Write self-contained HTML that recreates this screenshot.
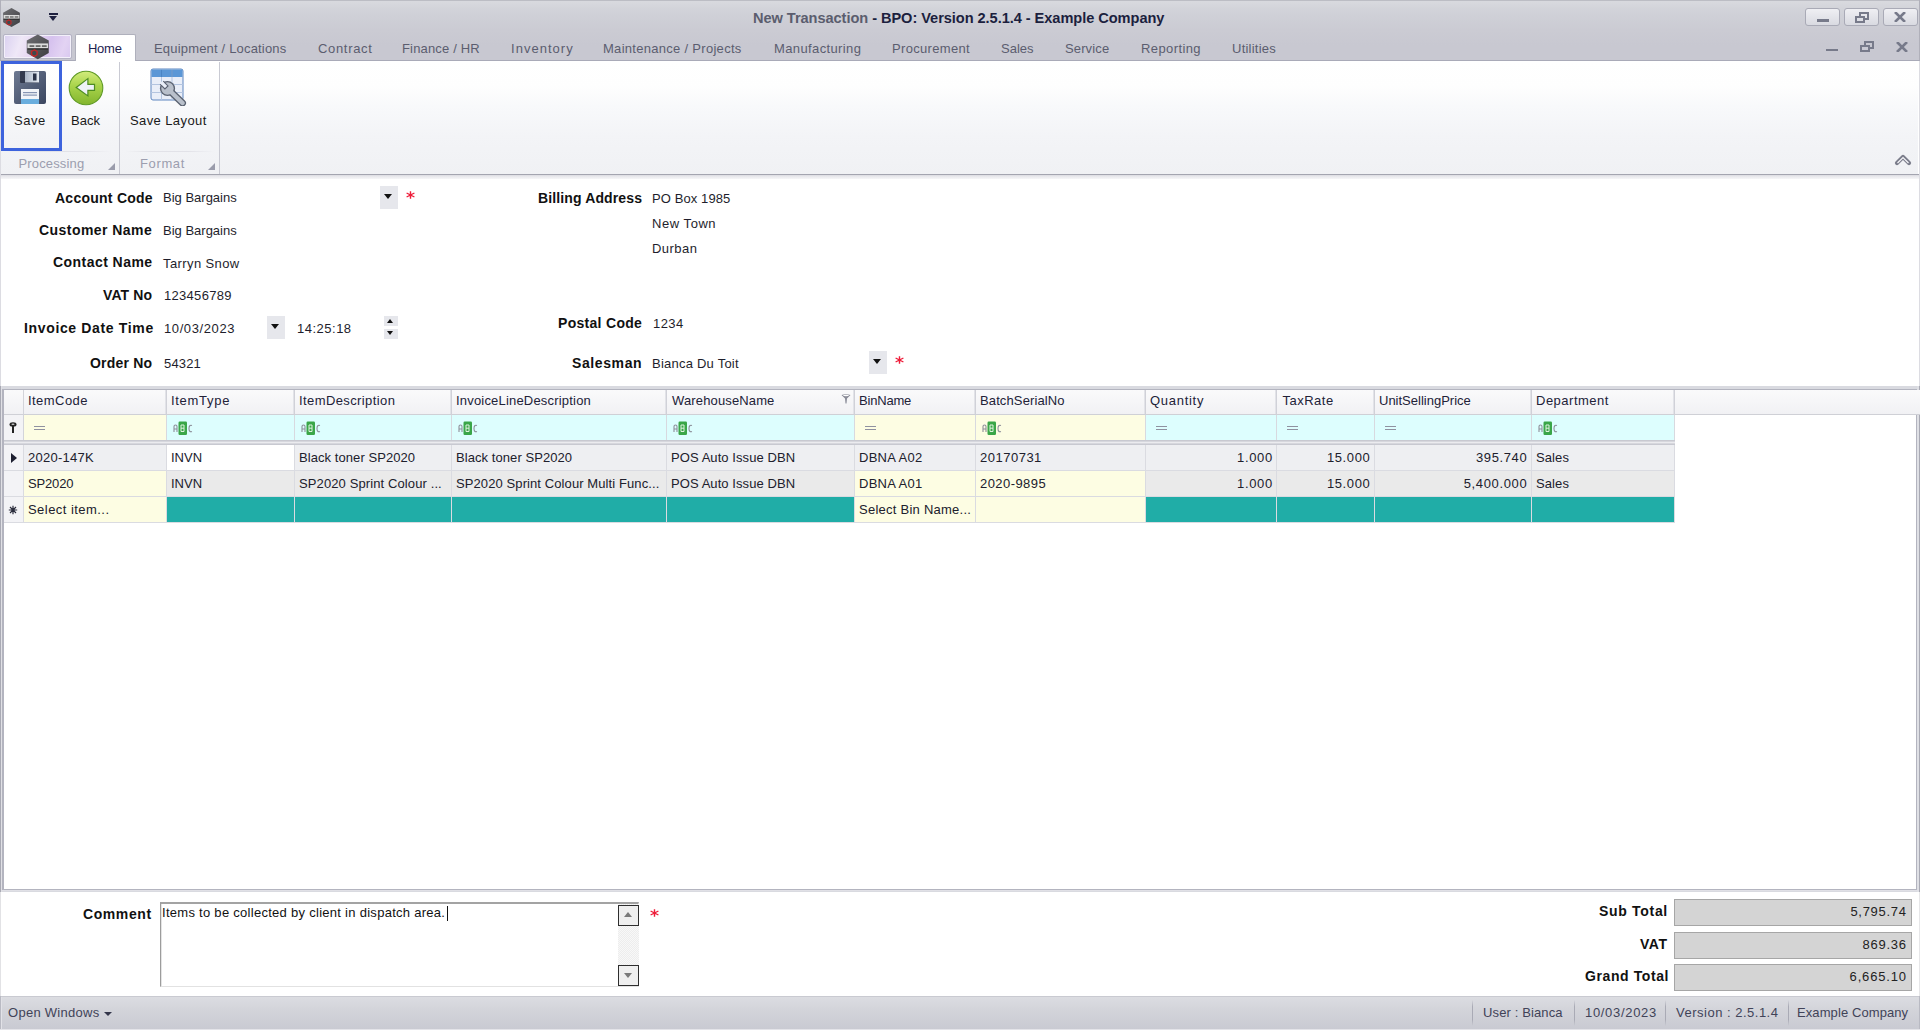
<!DOCTYPE html><html><head><meta charset="utf-8"><style>
*{box-sizing:border-box;margin:0;padding:0}
html,body{width:1920px;height:1030px;overflow:hidden;background:#fff;font-family:"Liberation Sans",sans-serif;font-size:13px;color:#1a1a1a}
div,span{position:absolute;white-space:nowrap}
.t{line-height:16px}
.tab{top:41px;font-size:13px;color:#5b5d6f;line-height:16px}
.wbtn{top:8px;width:35px;height:18px;border:1px solid #a9aab6;border-radius:3px;background:linear-gradient(#efeff3,#d9dae1)}
.lbl{font-weight:bold;font-size:14px;color:#111;line-height:16px;text-align:right}
.val{font-size:13px;color:#1e1e2c;line-height:16px}
.dd{width:18px;height:23px;background:#e6e7ec}
.dd i{position:absolute;left:4px;top:8px;width:0;height:0;border-left:4.7px solid transparent;border-right:4.7px solid transparent;border-top:5.5px solid #111}
.req{color:#e8202c;font-size:17px;font-weight:bold;line-height:16px}
.cell{height:26px;line-height:26px;padding-left:5px;font-size:13px;color:#20202c;overflow:hidden;border-right:1px solid #dadbe1;border-bottom:1px solid #dadbe1}
.hc{height:25px;line-height:22px;padding-left:5px;font-size:13px;color:#222238;background:linear-gradient(#fafafb,#f1f1f4);border-right:2px solid #dadbe0;border-bottom:1px solid #cfd0d6}
.fc{height:25px;border-right:1px solid #d8d9df}
.r{text-align:right;padding-left:0;padding-right:4px}
.abc{top:8px;left:5px;width:20px;height:14px}
.eq{top:11px;left:10px;width:11px;height:4px;border-top:1px solid #8f91a0;border-bottom:1px solid #8f91a0}
.tot{width:238px;height:27px;background:#d4d4d4;border:1px solid #a6a6a6;text-align:right;padding-right:5px;line-height:25px;font-size:13px;color:#222}
.sb{top:1005px;font-size:13px;color:#414358;line-height:16px}
.sep{top:1000px;width:1px;height:26px;background:linear-gradient(rgba(170,171,182,0),#a9aab5 25%,#a9aab5 75%,rgba(170,171,182,0))}
</style></head><body>
<div style="left:0;top:0;width:1920px;height:61px;background:linear-gradient(#d9dadf 0px,#d8d9de 2px,#d3d4da 8px,#cfd0d7 16px,#cbcbd3 30px,#c8c8d1 45px,#c8c8d1 61px)"></div>
<div style="left:0;top:0;width:1920px;height:1px;background:#bcbdc4"></div>
<div style="left:0;top:0;width:1px;height:61px;background:#b0b0ba"></div>
<div style="left:1919px;top:0;width:1px;height:61px;background:#b0b0ba"></div>
<div style="left:0;top:60px;width:1920px;height:1px;background:#a9aab8"></div>
<svg style="position:absolute;left:1px;top:7px" width="21" height="21" viewBox="0 0 20 20"><defs><linearGradient id="lg" x1="0" y1="0" x2="1" y2="1"><stop offset="0" stop-color="#707074"/><stop offset="1" stop-color="#3c3c40"/></linearGradient></defs><polygon points="10,1 18,5.5 18,14.5 10,19 2,14.5 2,5.5" fill="url(#lg)"/><rect x="2.5" y="7.6" width="15" height="3.6" fill="#dcdcdc"/><rect x="4" y="9" width="3.5" height="1" fill="#444"/><rect x="8.5" y="9" width="3.5" height="1" fill="#444"/><rect x="13" y="9" width="3.5" height="1" fill="#444"/><rect x="2.5" y="11.2" width="15" height="0.8" fill="#222"/><polygon points="7.5,12.3 9.5,13.4 9.5,15.8 7.5,17 5.5,15.8 5.5,13.4" fill="#3e4a4e" stroke="#c42626" stroke-width="1"/></svg>
<div style="left:49px;top:13px;width:9px;height:2px;background:#1f2140"></div>
<div style="left:49px;top:16px;width:0;height:0;border-left:4.5px solid transparent;border-right:4.5px solid transparent;border-top:5px solid #1f2140"></div>
<div class="t" style="left:753px;top:10px;font-weight:bold;font-size:14.6px;color:#1c1f3e;letter-spacing:-0.055px"><span style="position:static;color:#5b5d6e">New Transaction</span> - BPO: Version 2.5.1.4 - Example Company</div>
<div class="wbtn" style="left:1805px"></div>
<div class="wbtn" style="left:1844px"></div>
<div class="wbtn" style="left:1883px"></div>
<div style="left:1817px;top:19px;width:12px;height:3px;background:#777a8a"></div>
<div style="left:1859px;top:12px;width:10px;height:8px;border:2px solid #777a8a;border-top-width:2px"></div>
<div style="left:1855px;top:16px;width:10px;height:7px;border:2px solid #777a8a;background:#dedfe5"></div>
<svg style="position:absolute;left:1894px;top:12px" width="12" height="10" viewBox="0 0 12 10"><path d="M1,0 L11,10 M11,0 L1,10" stroke="#777a8a" stroke-width="2.6"/></svg>
<div style="left:1826px;top:49px;width:12px;height:2px;background:#777a8a"></div>
<div style="left:1864px;top:41px;width:10px;height:8px;border:2px solid #777a8a"></div>
<div style="left:1860px;top:45px;width:10px;height:7px;border:2px solid #777a8a;background:#c9c9d3"></div>
<svg style="position:absolute;left:1896px;top:42px" width="12" height="10" viewBox="0 0 12 10"><path d="M1,0 L11,10 M11,0 L1,10" stroke="#777a8a" stroke-width="2.6"/></svg>
<div style="left:3px;top:34px;width:69px;height:25px;border:1px solid #b5b4c4;box-shadow:inset 0 0 0 1px #f3f0fa;border-radius:2px;background:linear-gradient(110deg,#d9d0f0 0%,#efe8f7 25%,#e6d6f2 45%,#d6c2ee 65%,#e3d3f3 85%,#d8c8ef 100%)"></div>
<svg style="position:absolute;left:23.5px;top:33px" width="27.5" height="27.5" viewBox="0 0 20 20"><defs><linearGradient id="lg" x1="0" y1="0" x2="1" y2="1"><stop offset="0" stop-color="#707074"/><stop offset="1" stop-color="#3c3c40"/></linearGradient></defs><polygon points="10,1 18,5.5 18,14.5 10,19 2,14.5 2,5.5" fill="url(#lg)"/><rect x="2.5" y="7.6" width="15" height="3.6" fill="#dcdcdc"/><rect x="4" y="9" width="3.5" height="1" fill="#444"/><rect x="8.5" y="9" width="3.5" height="1" fill="#444"/><rect x="13" y="9" width="3.5" height="1" fill="#444"/><rect x="2.5" y="11.2" width="15" height="0.8" fill="#222"/><polygon points="7.5,12.3 9.5,13.4 9.5,15.8 7.5,17 5.5,15.8 5.5,13.4" fill="#3e4a4e" stroke="#c42626" stroke-width="1"/></svg>
<div style="left:75px;top:34px;width:61px;height:27px;background:#fff;border:1px solid #afb0bc;border-bottom:none;border-radius:2px 2px 0 0"></div>
<div class="tab" style="left:88px;letter-spacing:-0.27px;color:#1d2250">Home</div>
<div class="tab" style="left:154px;letter-spacing:0.18px">Equipment / Locations</div>
<div class="tab" style="left:318px;letter-spacing:0.67px">Contract</div>
<div class="tab" style="left:402px;letter-spacing:0.16px">Finance / HR</div>
<div class="tab" style="left:511px;letter-spacing:1.03px">Inventory</div>
<div class="tab" style="left:603px;letter-spacing:0.29px">Maintenance / Projects</div>
<div class="tab" style="left:774px;letter-spacing:0.38px">Manufacturing</div>
<div class="tab" style="left:892px;letter-spacing:0.33px">Procurement</div>
<div class="tab" style="left:1001px;letter-spacing:0px">Sales</div>
<div class="tab" style="left:1065px;letter-spacing:0.13px">Service</div>
<div class="tab" style="left:1141px;letter-spacing:0.4px">Reporting</div>
<div class="tab" style="left:1232px;letter-spacing:0.24px">Utilities</div>
<div style="left:1px;top:61px;width:1917px;height:113px;background:linear-gradient(#ffffff 0px,#fefefe 25px,#f8f9fb 45px,#f3f4f7 75px,#f0f1f4 113px)"></div>
<div style="left:0;top:174px;width:1920px;height:1px;background:#a4a5b0"></div>
<div style="left:0;top:175px;width:1920px;height:4px;background:linear-gradient(#dcdce1,#e8e8ec 35%,#f6f6f8 100%)"></div>
<div style="left:119px;top:62px;width:1px;height:112px;background:#c9cad3"></div>
<div style="left:219px;top:62px;width:1px;height:112px;background:#c9cad3"></div>
<div style="left:4px;top:151px;width:108px;height:1px;background:linear-gradient(90deg,rgba(220,220,228,0),#e2e2e8 30%,#e2e2e8 70%,rgba(220,220,228,0))"></div>
<div style="left:125px;top:151px;width:90px;height:1px;background:linear-gradient(90deg,rgba(220,220,228,0),#e2e2e8 30%,#e2e2e8 70%,rgba(220,220,228,0))"></div>
<div class="t" style="left:18.5px;top:156px;color:#9c9eaf;letter-spacing:0.15px">Processing</div>
<div class="t" style="left:140px;top:156px;color:#9c9eaf;letter-spacing:0.63px">Format</div>
<svg style="position:absolute;left:108px;top:163px" width="7" height="7"><path d="M7,0 L7,7 L0,7 Z" fill="#9a9cab"/></svg>
<svg style="position:absolute;left:208px;top:163px" width="7" height="7"><path d="M7,0 L7,7 L0,7 Z" fill="#9a9cab"/></svg>
<div style="left:1px;top:61px;width:61px;height:90px;border:3px solid #3d63dd"></div>
<svg style="position:absolute;left:14px;top:71px" width="32" height="33" viewBox="0 0 32 33">
<defs><linearGradient id="fl" x1="0" y1="0" x2="1" y2="1"><stop offset="0" stop-color="#6e7a92"/><stop offset="1" stop-color="#3b4660"/></linearGradient></defs>
<rect x="0" y="0" width="32" height="33" rx="2" fill="url(#fl)"/>
<rect x="6" y="0" width="19" height="12" rx="1" fill="#333a4e"/>
<defs><linearGradient id="sh" x1="0" y1="0" x2="1" y2="0"><stop offset="0" stop-color="#aab5c6"/><stop offset="1" stop-color="#e6ebf2"/></linearGradient></defs>
<rect x="11" y="0.5" width="14" height="11" fill="url(#sh)"/>
<rect x="19" y="2.5" width="3.5" height="7" fill="#2b3347"/>
<rect x="7" y="18" width="18" height="15" fill="#f2f4f8"/>
<rect x="9" y="21" width="14" height="1.2" fill="#8795b4"/><rect x="9" y="23.5" width="14" height="1.2" fill="#8795b4"/>
<rect x="7" y="28" width="18" height="5" fill="#6aaede"/>
</svg>
<div class="t" style="left:14px;top:113px;letter-spacing:0.5px">Save</div>
<svg style="position:absolute;left:68px;top:70px" width="36" height="36" viewBox="0 0 36 36">
<defs><linearGradient id="bk" x1="0" y1="0" x2="0" y2="1"><stop offset="0" stop-color="#d2ec7c"/><stop offset="0.45" stop-color="#a8d34a"/><stop offset="1" stop-color="#82b52e"/></linearGradient></defs>
<circle cx="18" cy="18" r="16.8" fill="url(#bk)" stroke="#5f9a26" stroke-width="1.1"/>
<path d="M8.2,17.4 L19.9,8.6 L19.9,14.4 L26.5,14.4 L26.5,20.4 L19.9,20.4 L19.9,25.9 Z" fill="#eef2f6" stroke="#4d8c22" stroke-width="1.2" stroke-linejoin="miter"/>
</svg>
<div class="t" style="left:71px;top:113px">Back</div>
<svg style="position:absolute;left:150px;top:68px" width="38" height="38" viewBox="0 0 38 38">
<rect x="1" y="1" width="32" height="31" rx="2" fill="#e9eef8" stroke="#5f86c0" stroke-width="1"/>
<rect x="1.5" y="1.5" width="31" height="7.5" fill="#5b97d6"/>
<path d="M11.5,1 V32 M22,1 V32 M1,16.5 H33 M1,24.5 H33" stroke="#b3c4df" stroke-width="1"/>
<path d="M11.5,1.5 V9 M22,1.5 V9" stroke="#4a84c4" stroke-width="1"/>
<path d="M19,22 L32.5,35" stroke="#596170" stroke-width="7" stroke-linecap="round"/>
<circle cx="17.5" cy="20.5" r="7.6" fill="#596170"/>
<path d="M19,22 L32.5,35" stroke="#b9c0cb" stroke-width="4.4" stroke-linecap="round"/>
<circle cx="17.5" cy="20.5" r="6.2" fill="#b9c0cb"/>
<path d="M15.3,12.2 V19 H19.7 V12.2" fill="#e9eef8" stroke="#596170" stroke-width="1.1" transform="rotate(-45 17.5 20.5)"/>
<rect x="15.85" y="11.5" width="3.3" height="2" fill="#e9eef8" transform="rotate(-45 17.5 20.5)"/>
</svg>
<div class="t" style="left:130px;top:113px;letter-spacing:0.4px">Save Layout</div>
<svg style="position:absolute;left:1894px;top:153px" width="18" height="14" viewBox="0 0 18 14"><path d="M3,10 L9,4 L15,10" fill="none" stroke="#7a7c8a" stroke-width="4.2" stroke-linejoin="round" stroke-linecap="round"/><path d="M3.5,10 L9,4.6 L14.5,10" fill="none" stroke="#f4f4f7" stroke-width="1.3" stroke-linejoin="miter"/></svg>
<div class="lbl" style="left:55px;top:190px;letter-spacing:0.25px;font-size:14px">Account Code</div>
<div class="lbl" style="left:39px;top:222px;letter-spacing:0.45px;font-size:14px">Customer Name</div>
<div class="lbl" style="left:53px;top:254px;letter-spacing:0.45px;font-size:14px">Contact Name</div>
<div class="lbl" style="left:103px;top:287px;letter-spacing:0.1px;font-size:14px">VAT No</div>
<div class="lbl" style="left:24px;top:320px;letter-spacing:0.65px;font-size:14px">Invoice Date Time</div>
<div class="lbl" style="left:90px;top:355px;letter-spacing:0.2px;font-size:14px">Order No</div>
<div class="lbl" style="left:538px;top:190px;letter-spacing:0.13px;font-size:14px">Billing Address</div>
<div class="lbl" style="left:558px;top:315px;letter-spacing:0.3px;font-size:14px">Postal Code</div>
<div class="lbl" style="left:572px;top:355px;letter-spacing:0.6px;font-size:14px">Salesman</div>
<div class="val" style="left:163px;top:190px;letter-spacing:0px">Big Bargains</div>
<div class="val" style="left:163px;top:223px;letter-spacing:0px">Big Bargains</div>
<div class="val" style="left:163px;top:256px;letter-spacing:0.4px">Tarryn Snow</div>
<div class="val" style="left:164px;top:288px;letter-spacing:0.3px">123456789</div>
<div class="val" style="left:164px;top:321px;letter-spacing:0.6px">10/03/2023</div>
<div class="val" style="left:164px;top:356px;letter-spacing:0.15px">54321</div>
<div class="val" style="left:297px;top:321px;letter-spacing:0.5px">14:25:18</div>
<div class="val" style="left:652px;top:191px;letter-spacing:0.1px">PO Box 1985</div>
<div class="val" style="left:652px;top:216px;letter-spacing:0.55px">New Town</div>
<div class="val" style="left:652px;top:241px;letter-spacing:0.45px">Durban</div>
<div class="val" style="left:653px;top:316px;letter-spacing:0.4px">1234</div>
<div class="val" style="left:652px;top:356px;letter-spacing:0.23px">Bianca Du Toit</div>
<div class="dd" style="left:380px;top:186px"><i></i></div>
<svg style="position:absolute;left:406px;top:191px" width="9" height="8" viewBox="0 0 9 8"><path d="M4.5,0.3 V7.7 M0.6,2 L8.4,6 M0.6,6 L8.4,2" stroke="#ee1d3a" stroke-width="1.4"/></svg>
<div class="dd" style="left:267px;top:316px"><i></i></div>
<div style="left:384px;top:316px;width:14px;height:10px;background:#e6e7ec"></div>
<div style="left:384px;top:329px;width:14px;height:10px;background:#e6e7ec"></div>
<div style="left:387px;top:319px;width:0;height:0;border-left:3.7px solid transparent;border-right:3.7px solid transparent;border-bottom:4.5px solid #111"></div>
<div style="left:387px;top:331px;width:0;height:0;border-left:3.7px solid transparent;border-right:3.7px solid transparent;border-top:4.5px solid #111"></div>
<div class="dd" style="left:869px;top:351px"><i></i></div>
<svg style="position:absolute;left:895px;top:356px" width="9" height="8" viewBox="0 0 9 8"><path d="M4.5,0.3 V7.7 M0.6,2 L8.4,6 M0.6,6 L8.4,2" stroke="#ee1d3a" stroke-width="1.4"/></svg>
<div style="left:0;top:61px;width:1px;height:325px;background:#dcdce2"></div>
<div style="left:1919px;top:61px;width:1px;height:325px;background:#dcdce2"></div>
<div style="left:0;top:892px;width:1px;height:104px;background:#e2e2e5"></div>
<div style="left:1919px;top:892px;width:1px;height:104px;background:#e6e6e8"></div>
<div style="left:0;top:386px;width:1920px;height:506px;background:#a9aab4"></div>
<div style="left:1px;top:386px;width:1918px;height:506px;background:#d9dae0"></div>
<div style="left:1px;top:386px;width:1px;height:506px;background:#e0e0e5"></div>
<div style="left:1917px;top:386px;width:2px;height:506px;background:#dfe0e5"></div>
<div style="left:1px;top:890px;width:1918px;height:1px;background:#e0e0e6"></div>
<div style="left:2px;top:389px;width:1915px;height:501px;background:#b3b4bf"></div>
<div style="left:4px;top:390px;width:1912px;height:499px;background:#fff"></div>
<div class="hc" style="left:4px;top:390px;width:20px;border-right:1px solid #d3d4da"></div>
<div class="hc" style="left:24px;top:390px;width:143px;padding-left:4px;letter-spacing:0.45px;border-right:1px solid #d0d1d8;box-shadow:inset -1px 0 0 #e2e3e8">ItemCode</div>
<div class="hc" style="left:167px;top:390px;width:128px;padding-left:4px;letter-spacing:0.7px;border-right:1px solid #d0d1d8;box-shadow:inset -1px 0 0 #e2e3e8">ItemType</div>
<div class="hc" style="left:295px;top:390px;width:157px;padding-left:4px;letter-spacing:0.4px;border-right:1px solid #d0d1d8;box-shadow:inset -1px 0 0 #e2e3e8">ItemDescription</div>
<div class="hc" style="left:452px;top:390px;width:215px;padding-left:4px;letter-spacing:0.19px;border-right:1px solid #d0d1d8;box-shadow:inset -1px 0 0 #e2e3e8">InvoiceLineDescription</div>
<div class="hc" style="left:667px;top:390px;width:188px;padding-left:5px;letter-spacing:0.14px;border-right:1px solid #d0d1d8;box-shadow:inset -1px 0 0 #e2e3e8">WarehouseName</div>
<div class="hc" style="left:855px;top:390px;width:121px;padding-left:4px;letter-spacing:-0.2px;border-right:1px solid #d0d1d8;box-shadow:inset -1px 0 0 #e2e3e8">BinName</div>
<div class="hc" style="left:976px;top:390px;width:170px;padding-left:4px;letter-spacing:0.12px;border-right:1px solid #d0d1d8;box-shadow:inset -1px 0 0 #e2e3e8">BatchSerialNo</div>
<div class="hc" style="left:1146px;top:390px;width:131px;padding-left:4px;letter-spacing:0.72px;border-right:1px solid #d0d1d8;box-shadow:inset -1px 0 0 #e2e3e8">Quantity</div>
<div class="hc" style="left:1277px;top:390px;width:98px;padding-left:5.5px;letter-spacing:0.5px;border-right:1px solid #d0d1d8;box-shadow:inset -1px 0 0 #e2e3e8">TaxRate</div>
<div class="hc" style="left:1375px;top:390px;width:157px;padding-left:4px;letter-spacing:0px;border-right:1px solid #d0d1d8;box-shadow:inset -1px 0 0 #e2e3e8">UnitSellingPrice</div>
<div class="hc" style="left:1532px;top:390px;width:143px;padding-left:4px;letter-spacing:0.5px;border-right:1px solid #d0d1d8;box-shadow:inset -1px 0 0 #e2e3e8">Department</div>
<div class="hc" style="left:1675px;top:390px;width:1241px;border-right:none"></div>
<svg style="position:absolute;left:841px;top:394px" width="10" height="10" viewBox="0 0 10 10"><path d="M0.5,1 Q5,-0.5 9.5,1 L6,4.5 L5.5,9.5 L4.5,9.5 L4,4.5 Z" fill="#8a8c98"/><ellipse cx="5" cy="1.5" rx="3" ry="0.8" fill="#fff"/></svg>
<div class="fc" style="left:4px;top:415px;width:20px;background:#f3f3f6;border-right:1px solid #d3d4da"></div>
<svg style="position:absolute;left:9px;top:422px" width="8" height="11" viewBox="0 0 8 11"><ellipse cx="4" cy="2.5" rx="3.5" ry="2.2" fill="#222"/><rect x="3" y="3" width="2" height="8" fill="#222"/><ellipse cx="4" cy="2.3" rx="1.6" ry="0.8" fill="#ccc"/></svg>
<div class="fc" style="left:24px;top:415px;width:143px;background:#fdfde3"><div class="eq"></div></div>
<div class="fc" style="left:167px;top:415px;width:128px;background:#ddfefe"><svg style="position:absolute;left:6px;top:6px" width="22" height="15" viewBox="0 0 22 15"><path d="M1,11 L1,5.5 Q1,4 2.5,4 Q4,4 4,5.5 L4,11 M1,8 L4,8" fill="none" stroke="#8d8e99" stroke-width="1.1"/><rect x="5.5" y="0.5" width="8.5" height="13.5" rx="1.2" fill="#3aa648"/><path d="M8,4 L11,4 L11,10.5 L8,10.5 Z M8,7.2 L11,7.2" fill="none" stroke="#dff2df" stroke-width="1"/><path d="M19,4.5 Q16,3.5 16,7.5 Q16,11.5 19,10.5" fill="none" stroke="#8d8e99" stroke-width="1.1"/></svg></div>
<div class="fc" style="left:295px;top:415px;width:157px;background:#ddfefe"><svg style="position:absolute;left:6px;top:6px" width="22" height="15" viewBox="0 0 22 15"><path d="M1,11 L1,5.5 Q1,4 2.5,4 Q4,4 4,5.5 L4,11 M1,8 L4,8" fill="none" stroke="#8d8e99" stroke-width="1.1"/><rect x="5.5" y="0.5" width="8.5" height="13.5" rx="1.2" fill="#3aa648"/><path d="M8,4 L11,4 L11,10.5 L8,10.5 Z M8,7.2 L11,7.2" fill="none" stroke="#dff2df" stroke-width="1"/><path d="M19,4.5 Q16,3.5 16,7.5 Q16,11.5 19,10.5" fill="none" stroke="#8d8e99" stroke-width="1.1"/></svg></div>
<div class="fc" style="left:452px;top:415px;width:215px;background:#ddfefe"><svg style="position:absolute;left:6px;top:6px" width="22" height="15" viewBox="0 0 22 15"><path d="M1,11 L1,5.5 Q1,4 2.5,4 Q4,4 4,5.5 L4,11 M1,8 L4,8" fill="none" stroke="#8d8e99" stroke-width="1.1"/><rect x="5.5" y="0.5" width="8.5" height="13.5" rx="1.2" fill="#3aa648"/><path d="M8,4 L11,4 L11,10.5 L8,10.5 Z M8,7.2 L11,7.2" fill="none" stroke="#dff2df" stroke-width="1"/><path d="M19,4.5 Q16,3.5 16,7.5 Q16,11.5 19,10.5" fill="none" stroke="#8d8e99" stroke-width="1.1"/></svg></div>
<div class="fc" style="left:667px;top:415px;width:188px;background:#ddfefe"><svg style="position:absolute;left:6px;top:6px" width="22" height="15" viewBox="0 0 22 15"><path d="M1,11 L1,5.5 Q1,4 2.5,4 Q4,4 4,5.5 L4,11 M1,8 L4,8" fill="none" stroke="#8d8e99" stroke-width="1.1"/><rect x="5.5" y="0.5" width="8.5" height="13.5" rx="1.2" fill="#3aa648"/><path d="M8,4 L11,4 L11,10.5 L8,10.5 Z M8,7.2 L11,7.2" fill="none" stroke="#dff2df" stroke-width="1"/><path d="M19,4.5 Q16,3.5 16,7.5 Q16,11.5 19,10.5" fill="none" stroke="#8d8e99" stroke-width="1.1"/></svg></div>
<div class="fc" style="left:855px;top:415px;width:121px;background:#fdfde3"><div class="eq"></div></div>
<div class="fc" style="left:976px;top:415px;width:170px;background:#fdfde3"><svg style="position:absolute;left:6px;top:6px" width="22" height="15" viewBox="0 0 22 15"><path d="M1,11 L1,5.5 Q1,4 2.5,4 Q4,4 4,5.5 L4,11 M1,8 L4,8" fill="none" stroke="#8d8e99" stroke-width="1.1"/><rect x="5.5" y="0.5" width="8.5" height="13.5" rx="1.2" fill="#3aa648"/><path d="M8,4 L11,4 L11,10.5 L8,10.5 Z M8,7.2 L11,7.2" fill="none" stroke="#dff2df" stroke-width="1"/><path d="M19,4.5 Q16,3.5 16,7.5 Q16,11.5 19,10.5" fill="none" stroke="#8d8e99" stroke-width="1.1"/></svg></div>
<div class="fc" style="left:1146px;top:415px;width:131px;background:#ddfefe"><div class="eq"></div></div>
<div class="fc" style="left:1277px;top:415px;width:98px;background:#ddfefe"><div class="eq"></div></div>
<div class="fc" style="left:1375px;top:415px;width:157px;background:#ddfefe"><div class="eq"></div></div>
<div class="fc" style="left:1532px;top:415px;width:143px;background:#ddfefe"><svg style="position:absolute;left:6px;top:6px" width="22" height="15" viewBox="0 0 22 15"><path d="M1,11 L1,5.5 Q1,4 2.5,4 Q4,4 4,5.5 L4,11 M1,8 L4,8" fill="none" stroke="#8d8e99" stroke-width="1.1"/><rect x="5.5" y="0.5" width="8.5" height="13.5" rx="1.2" fill="#3aa648"/><path d="M8,4 L11,4 L11,10.5 L8,10.5 Z M8,7.2 L11,7.2" fill="none" stroke="#dff2df" stroke-width="1"/><path d="M19,4.5 Q16,3.5 16,7.5 Q16,11.5 19,10.5" fill="none" stroke="#8d8e99" stroke-width="1.1"/></svg></div>
<div style="left:4px;top:440px;width:1671px;height:5px;background:#d6d7dd;border-top:1px solid #c8c9d1;border-bottom:1px solid #c8c9d1"></div>
<div style="left:4px;top:442px;width:1671px;height:1px;background:#ebebef"></div>
<div class="cell" style="left:4px;top:445px;width:20px;background:#f3f3f6"></div>
<div class="cell" style="left:24px;top:445px;width:143px;background:#eeeff2;letter-spacing:0.27px;line-height:25px;padding-left:4px">2020-147K</div>
<div class="cell" style="left:167px;top:445px;width:128px;background:#ffffff;letter-spacing:0px;line-height:25px;padding-left:4px">INVN</div>
<div class="cell" style="left:295px;top:445px;width:157px;background:#eeeff2;letter-spacing:0.07px;line-height:25px;padding-left:4px">Black toner SP2020</div>
<div class="cell" style="left:452px;top:445px;width:215px;background:#eeeff2;letter-spacing:0.07px;line-height:25px;padding-left:4px">Black toner SP2020</div>
<div class="cell" style="left:667px;top:445px;width:188px;background:#eeeff2;letter-spacing:0.07px;line-height:25px;padding-left:4px">POS Auto Issue DBN</div>
<div class="cell" style="left:855px;top:445px;width:121px;background:#eeeff2;letter-spacing:0.25px;line-height:25px;padding-left:4px">DBNA A02</div>
<div class="cell" style="left:976px;top:445px;width:170px;background:#eeeff2;letter-spacing:0.5px;line-height:25px;padding-left:4px">20170731</div>
<div class="cell r" style="left:1146px;top:445px;width:131px;background:#eeeff2;letter-spacing:0.7px;line-height:25px;padding-left:4px;padding-right:3.00px">1.000</div>
<div class="cell r" style="left:1277px;top:445px;width:98px;background:#eeeff2;letter-spacing:0.6px;line-height:25px;padding-left:4px;padding-right:3.70px">15.000</div>
<div class="cell r" style="left:1375px;top:445px;width:157px;background:#eeeff2;letter-spacing:0.63px;line-height:25px;padding-left:4px;padding-right:3.67px">395.740</div>
<div class="cell" style="left:1532px;top:445px;width:143px;background:#eeeff2;letter-spacing:0.1px;line-height:25px;padding-left:4px">Sales</div>
<div class="cell" style="left:4px;top:471px;width:20px;background:#f3f3f6"></div>
<div class="cell" style="left:24px;top:471px;width:143px;background:#fdfde3;letter-spacing:-0.15px;line-height:25px;padding-left:4px">SP2020</div>
<div class="cell" style="left:167px;top:471px;width:128px;background:#eaeaea;letter-spacing:0px;line-height:25px;padding-left:4px">INVN</div>
<div class="cell" style="left:295px;top:471px;width:157px;background:#eaeaea;letter-spacing:0.11px;line-height:25px;padding-left:4px">SP2020 Sprint Colour ...</div>
<div class="cell" style="left:452px;top:471px;width:215px;background:#eaeaea;letter-spacing:0.095px;line-height:25px;padding-left:4px">SP2020 Sprint Colour Multi Func...</div>
<div class="cell" style="left:667px;top:471px;width:188px;background:#eaeaea;letter-spacing:0.07px;line-height:25px;padding-left:4px">POS Auto Issue DBN</div>
<div class="cell" style="left:855px;top:471px;width:121px;background:#fdfde3;letter-spacing:0.25px;line-height:25px;padding-left:4px">DBNA A01</div>
<div class="cell" style="left:976px;top:471px;width:170px;background:#fdfde3;letter-spacing:0.44px;line-height:25px;padding-left:4px">2020-9895</div>
<div class="cell r" style="left:1146px;top:471px;width:131px;background:#eaeaea;letter-spacing:0.7px;line-height:25px;padding-left:4px;padding-right:3.00px">1.000</div>
<div class="cell r" style="left:1277px;top:471px;width:98px;background:#eaeaea;letter-spacing:0.6px;line-height:25px;padding-left:4px;padding-right:3.70px">15.000</div>
<div class="cell r" style="left:1375px;top:471px;width:157px;background:#eaeaea;letter-spacing:0.65px;line-height:25px;padding-left:4px;padding-right:3.65px">5,400.000</div>
<div class="cell" style="left:1532px;top:471px;width:143px;background:#eaeaea;letter-spacing:0.1px;line-height:25px;padding-left:4px">Sales</div>
<div class="cell" style="left:4px;top:497px;width:20px;background:#f3f3f6"></div>
<div class="cell" style="left:24px;top:497px;width:143px;background:#fdfde3;letter-spacing:0.45px;line-height:25px;padding-left:4px">Select item...</div>
<div class="cell" style="left:167px;top:497px;width:128px;background:#20ada7;letter-spacing:0px;line-height:25px;padding-left:4px"></div>
<div class="cell" style="left:295px;top:497px;width:157px;background:#20ada7;letter-spacing:0px;line-height:25px;padding-left:4px"></div>
<div class="cell" style="left:452px;top:497px;width:215px;background:#20ada7;letter-spacing:0px;line-height:25px;padding-left:4px"></div>
<div class="cell" style="left:667px;top:497px;width:188px;background:#20ada7;letter-spacing:0px;line-height:25px;padding-left:4px"></div>
<div class="cell" style="left:855px;top:497px;width:121px;background:#fdfde3;letter-spacing:0.25px;line-height:25px;padding-left:4px">Select Bin Name...</div>
<div class="cell" style="left:976px;top:497px;width:170px;background:#fdfde3;letter-spacing:0px;line-height:25px;padding-left:4px"></div>
<div class="cell r" style="left:1146px;top:497px;width:131px;background:#20ada7;letter-spacing:0px;line-height:25px;padding-left:4px"></div>
<div class="cell r" style="left:1277px;top:497px;width:98px;background:#20ada7;letter-spacing:0px;line-height:25px;padding-left:4px"></div>
<div class="cell r" style="left:1375px;top:497px;width:157px;background:#20ada7;letter-spacing:0px;line-height:25px;padding-left:4px"></div>
<div class="cell" style="left:1532px;top:497px;width:143px;background:#20ada7;letter-spacing:0px;line-height:25px;padding-left:4px"></div>
<svg style="position:absolute;left:11px;top:453px" width="6" height="10" viewBox="0 0 6 10"><path d="M0,0 L6,5 L0,10 Z" fill="#1d1f30"/></svg>
<svg style="position:absolute;left:8px;top:505px" width="10" height="10" viewBox="0 0 10 10"><path d="M5,0.8 V9.2 M0.8,5 H9.2 M2,2 L8,8 M8,2 L2,8" stroke="#2a2c3c" stroke-width="1.2"/><circle cx="5" cy="5" r="1.4" fill="#2a2c3c"/></svg>
<div class="lbl" style="left:83px;top:906px;letter-spacing:0.58px">Comment</div>
<div style="left:160px;top:902px;width:479px;height:85px;border:1px solid #e2e2e2;border-top:2px solid #a3a3a3;border-left:1px solid #9c9c9c;background:#fff"></div>
<div style="left:161px;top:904px;width:1px;height:82px;background:#e4e4e4"></div>
<div class="val" style="left:162px;top:905px;color:#111;letter-spacing:0.28px">Items to be collected by client in dispatch area.</div>
<div style="left:447px;top:906px;width:1px;height:15px;background:#111"></div>
<div style="left:618px;top:904px;width:21px;height:82px;background-color:#f8f8f8;background-image:linear-gradient(45deg,#ededed 25%,transparent 25%,transparent 75%,#ededed 75%),linear-gradient(45deg,#ededed 25%,transparent 25%,transparent 75%,#ededed 75%);background-size:2px 2px;background-position:0 0,1px 1px"></div>
<div style="left:618px;top:905px;width:21px;height:21px;border:1px solid #2e2e2e;background:#efefef"></div>
<div style="left:624px;top:912px;width:0;height:0;border-left:4.5px solid transparent;border-right:4.5px solid transparent;border-bottom:5px solid #7a7a7a"></div>
<div style="left:618px;top:965px;width:21px;height:21px;border:1px solid #2e2e2e;background:#efefef"></div>
<div style="left:624px;top:973px;width:0;height:0;border-left:4.5px solid transparent;border-right:4.5px solid transparent;border-top:5px solid #7a7a7a"></div>
<svg style="position:absolute;left:650px;top:909px" width="9" height="8" viewBox="0 0 9 8"><path d="M4.5,0.3 V7.7 M0.6,2 L8.4,6 M0.6,6 L8.4,2" stroke="#ee1d3a" stroke-width="1.4"/></svg>
<div class="lbl" style="left:1599px;top:903px;letter-spacing:0.69px">Sub Total</div>
<div class="tot" style="left:1674px;top:899px;letter-spacing:0.71px;padding-right:4.29px;line-height:24px">5,795.74</div>
<div class="lbl" style="left:1640px;top:936px;letter-spacing:0.55px">VAT</div>
<div class="tot" style="left:1674px;top:932px;letter-spacing:0.76px;padding-right:4.24px;line-height:24px">869.36</div>
<div class="lbl" style="left:1585px;top:968px;letter-spacing:0.59px">Grand Total</div>
<div class="tot" style="left:1674px;top:964px;letter-spacing:0.83px;padding-right:4.17px;line-height:24px">6,665.10</div>
<div style="left:0;top:996px;width:1920px;height:34px;background:linear-gradient(#dcdde2,#d3d4da 40%,#c9cad2)"></div>
<div style="left:0;top:996px;width:1920px;height:1px;background:#c9cad1"></div>
<div style="left:0;top:996px;width:1px;height:34px;background:#b9bac3"></div>
<div style="left:1px;top:997px;width:1px;height:32px;background:#e2e2e7"></div>
<div style="left:1919px;top:996px;width:1px;height:34px;background:#b9bac3"></div>
<div style="left:0;top:1029px;width:1920px;height:1px;background:#e4e4e9"></div>
<div class="sb" style="left:8px;letter-spacing:0.28px">Open Windows</div>
<div style="left:104px;top:1012px;width:0;height:0;border-left:4px solid transparent;border-right:4px solid transparent;border-top:4px solid #33354a"></div>
<div class="sep" style="left:1472px"></div>
<div class="sep" style="left:1574px"></div>
<div class="sep" style="left:1665px"></div>
<div class="sep" style="left:1788px"></div>
<div class="sb" style="left:1483px;letter-spacing:0.13px">User : Bianca</div>
<div class="sb" style="left:1585px;letter-spacing:0.68px">10/03/2023</div>
<div class="sb" style="left:1676px;letter-spacing:0.5px">Version : 2.5.1.4</div>
<div class="sb" style="left:1797px;letter-spacing:0.09px">Example Company</div>
</body></html>
